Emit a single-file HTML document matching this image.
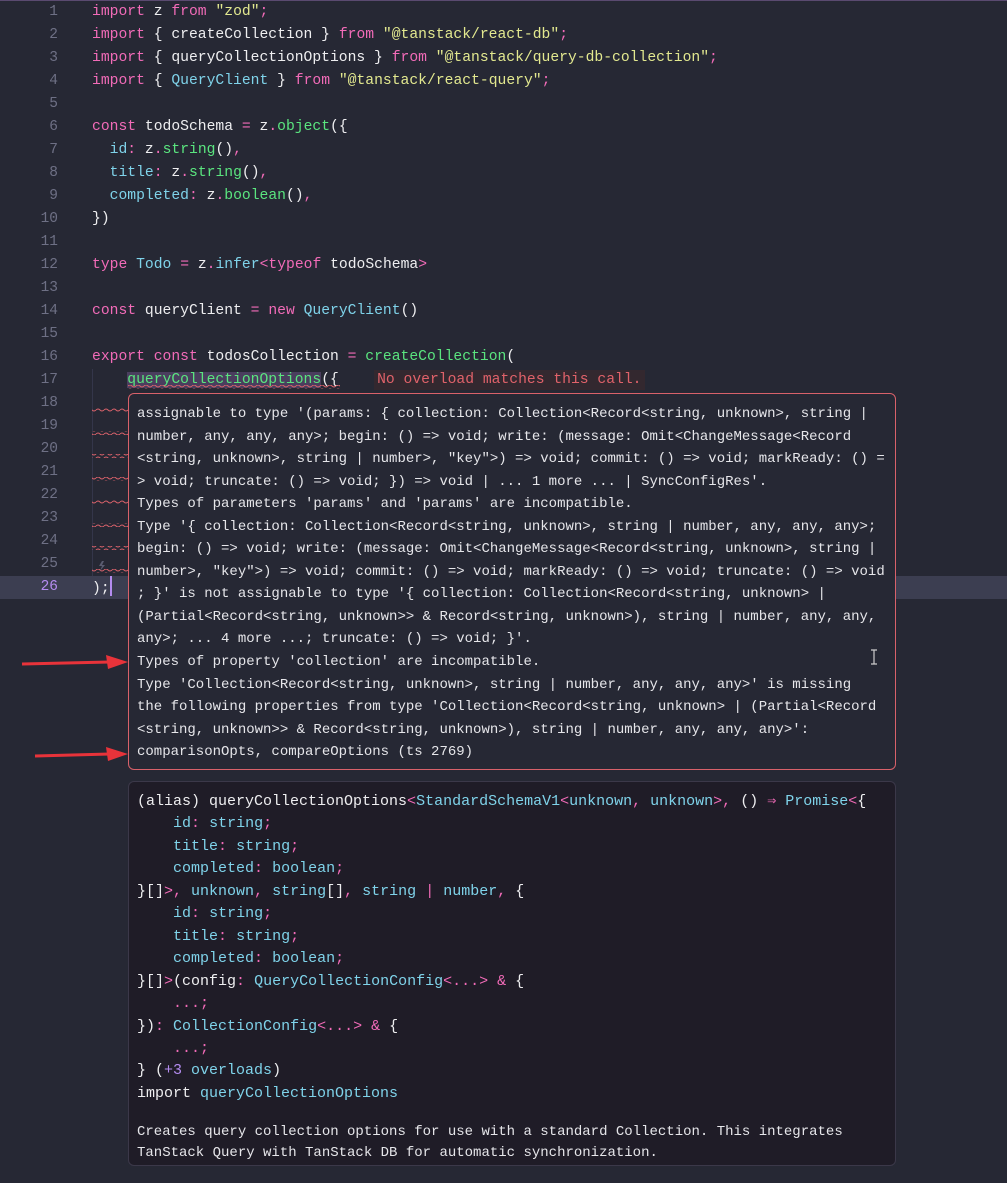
<!DOCTYPE html>
<html><head><meta charset="utf-8">
<style>
*{margin:0;padding:0;box-sizing:border-box}
body{width:1007px;height:1183px;background:#262834;overflow:hidden;position:relative;font-family:"Liberation Mono","DejaVu Sans Mono",monospace;color:#eeeef0}
.topline{position:absolute;left:0;top:0;width:1007px;height:1px;background:#5a4a70}
.ln{position:absolute;left:0;width:58px;text-align:right;font-size:14.5px;color:#6e7085;line-height:23px}
.code{position:absolute;left:92px;font-size:14.7px;line-height:23px;white-space:pre}
.k{color:#f26bb8}.s{color:#e2e88f}.f{color:#5ae57f}.c{color:#7fd3ea}.p{color:#f26bb8}.w{color:#eeeef0}.n{color:#b48cf0}
.hl26{position:absolute;left:0;top:576px;width:1007px;height:23px;background:#3c3e51}
.err{position:absolute;left:128px;top:393px;width:768px;height:377px;border:1px solid #d8616a;border-radius:6px;background:#262834;overflow:hidden}
.err pre{position:absolute;left:8px;top:9px;font-family:inherit;font-size:14px;line-height:22.55px;color:#e6e6ea;white-space:pre}
.hov{position:absolute;left:128px;top:781px;width:768px;height:385px;border:1px solid #3b3849;border-radius:6px;background:#1f1c27;overflow:hidden}
.hov pre{position:absolute;left:8px;top:9px;font-family:inherit;font-size:15px;line-height:22.45px;color:#eeeef0;white-space:pre}
.doc{position:absolute;left:8px;top:340px;font-size:14px;line-height:20.5px;color:#e6e6ea;white-space:pre}
</style></head><body>
<div class="topline"></div>
<div class="hl26"></div>
<div style="position:absolute;left:92px;top:369px;width:1px;height:207px;background:#34364a"></div>

<div class="ln" style="top:1px">1<br>2<br>3<br>4<br>5<br>6<br>7<br>8<br>9<br>10<br>11<br>12<br>13<br>14<br>15<br>16<br>17<br>18<br>19<br>20<br>21<br>22<br>23<br>24<br>25<br><span style="color:#b48cf0">26</span></div>

<div class="code" style="top:1px"><span class="k">import</span> z <span class="k">from</span> <span class="s">"zod"</span><span class="p">;</span>
<span class="k">import</span> { createCollection } <span class="k">from</span> <span class="s">"@tanstack/react-db"</span><span class="p">;</span>
<span class="k">import</span> { queryCollectionOptions } <span class="k">from</span> <span class="s">"@tanstack/query-db-collection"</span><span class="p">;</span>
<span class="k">import</span> { <span class="c">QueryClient</span> } <span class="k">from</span> <span class="s">"@tanstack/react-query"</span><span class="p">;</span>

<span class="k">const</span> todoSchema <span class="p">=</span> z<span class="p">.</span><span class="f">object</span>({
  <span class="c">id</span><span class="p">:</span> z<span class="p">.</span><span class="f">string</span>()<span class="p">,</span>
  <span class="c">title</span><span class="p">:</span> z<span class="p">.</span><span class="f">string</span>()<span class="p">,</span>
  <span class="c">completed</span><span class="p">:</span> z<span class="p">.</span><span class="f">boolean</span>()<span class="p">,</span>
})

<span class="k">type</span> <span class="c">Todo</span> <span class="p">=</span> z<span class="p">.</span><span class="c">infer</span><span class="p">&lt;</span><span class="k">typeof</span> todoSchema<span class="p">&gt;</span>

<span class="k">const</span> queryClient <span class="p">=</span> <span class="k">new</span> <span class="c">QueryClient</span>()

<span class="k">export</span> <span class="k">const</span> todosCollection <span class="p">=</span> <span class="f">createCollection</span>(
    <span class="f" style="background:#4a3e5e">queryCollectionOptions</span>({    <span style="color:#e0626a;background:#33282f;padding:2px 3px">No overload matches this call.</span>








);<span style="display:inline-block;width:2px;height:20px;background:#b48cf0;vertical-align:-4px"></span></div>

<svg style="position:absolute;left:0;top:0" width="1007" height="1183">
<defs><pattern id="wv" width="8" height="4" patternUnits="userSpaceOnUse"><path d="M0 2 Q2 0 4 2 T8 2" stroke="#d8616a" stroke-width="1" fill="none"/></pattern></defs>
<rect x="128" y="385" width="212" height="4" fill="url(#wv)"/>
<rect x="92" y="408" width="36" height="4" fill="url(#wv)"/>
<rect x="92" y="431" width="36" height="4" fill="url(#wv)"/>
<rect x="92" y="454" width="36" height="4" fill="url(#wv)"/>
<rect x="92" y="477" width="36" height="4" fill="url(#wv)"/>
<rect x="92" y="500" width="36" height="4" fill="url(#wv)"/>
<rect x="92" y="523" width="36" height="4" fill="url(#wv)"/>
<rect x="92" y="546" width="36" height="4" fill="url(#wv)"/>
<rect x="92" y="569" width="36" height="4" fill="url(#wv)"/>
<path d="M102 561 l-3 5 h3 l-2 5 l5 -6 h-3 l2 -4z" fill="#5a5c70"/>
</svg>

<div class="err"><pre>assignable to type '(params: { collection: Collection&lt;Record&lt;string, unknown&gt;, string |
number, any, any, any&gt;; begin: () =&gt; void; write: (message: Omit&lt;ChangeMessage&lt;Record
&lt;string, unknown&gt;, string | number&gt;, "key"&gt;) =&gt; void; commit: () =&gt; void; markReady: () =
&gt; void; truncate: () =&gt; void; }) =&gt; void | ... 1 more ... | SyncConfigRes'.
Types of parameters 'params' and 'params' are incompatible.
Type '{ collection: Collection&lt;Record&lt;string, unknown&gt;, string | number, any, any, any&gt;;
begin: () =&gt; void; write: (message: Omit&lt;ChangeMessage&lt;Record&lt;string, unknown&gt;, string |
number&gt;, "key"&gt;) =&gt; void; commit: () =&gt; void; markReady: () =&gt; void; truncate: () =&gt; void
; }' is not assignable to type '{ collection: Collection&lt;Record&lt;string, unknown&gt; |
(Partial&lt;Record&lt;string, unknown&gt;&gt; &amp; Record&lt;string, unknown&gt;), string | number, any, any,
any&gt;; ... 4 more ...; truncate: () =&gt; void; }'.
Types of property 'collection' are incompatible.
Type 'Collection&lt;Record&lt;string, unknown&gt;, string | number, any, any, any&gt;' is missing
the following properties from type 'Collection&lt;Record&lt;string, unknown&gt; | (Partial&lt;Record
&lt;string, unknown&gt;&gt; &amp; Record&lt;string, unknown&gt;), string | number, any, any, any&gt;':
comparisonOpts, compareOptions (ts 2769)</pre>
<svg style="position:absolute;left:740px;top:255px" width="10" height="16"><path d="M2 1h6M5 1v14M2 15h6" stroke="#ccc" stroke-width="1.2" fill="none"/></svg>
</div>

<div class="hov"><pre>(alias) queryCollectionOptions<span class="p">&lt;</span><span class="c">StandardSchemaV1</span><span class="p">&lt;</span><span class="c">unknown</span><span class="p">,</span> <span class="c">unknown</span><span class="p">&gt;,</span> () <span class="p">⇒</span> <span class="c">Promise</span><span class="p">&lt;</span>{
    <span class="c">id</span><span class="p">:</span> <span class="c">string</span><span class="p">;</span>
    <span class="c">title</span><span class="p">:</span> <span class="c">string</span><span class="p">;</span>
    <span class="c">completed</span><span class="p">:</span> <span class="c">boolean</span><span class="p">;</span>
}[]<span class="p">&gt;,</span> <span class="c">unknown</span><span class="p">,</span> <span class="c">string</span>[]<span class="p">,</span> <span class="c">string</span> <span class="p">|</span> <span class="c">number</span><span class="p">,</span> {
    <span class="c">id</span><span class="p">:</span> <span class="c">string</span><span class="p">;</span>
    <span class="c">title</span><span class="p">:</span> <span class="c">string</span><span class="p">;</span>
    <span class="c">completed</span><span class="p">:</span> <span class="c">boolean</span><span class="p">;</span>
}[]<span class="p">&gt;</span>(config<span class="p">:</span> <span class="c">QueryCollectionConfig</span><span class="p">&lt;...&gt;</span> <span class="p">&amp;</span> {
    <span class="p">...;</span>
})<span class="p">:</span> <span class="c">CollectionConfig</span><span class="p">&lt;...&gt;</span> <span class="p">&amp;</span> {
    <span class="p">...;</span>
} (<span class="n">+3</span> <span class="c">overloads</span>)
import <span class="c">queryCollectionOptions</span></pre>
<div class="doc">Creates query collection options for use with a standard Collection. This integrates
TanStack Query with TanStack DB for automatic synchronization.</div>
</div>

<svg style="position:absolute;left:0;top:0" width="140" height="780">
<path d="M22 664 L110 662" stroke="#e8333a" stroke-width="3"/>
<path d="M128 662 L106 655 L108 669z" fill="#e8333a"/>
<path d="M35 756 L110 754" stroke="#e8333a" stroke-width="3"/>
<path d="M128 754 L106 747 L108 761z" fill="#e8333a"/>
</svg>
</body></html>
